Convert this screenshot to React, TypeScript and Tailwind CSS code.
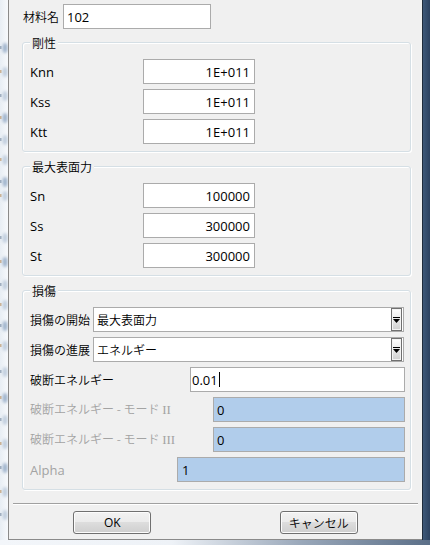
import React from "react";

const JP = "font-['Noto_Sans_CJK_JP',sans-serif] font-[350]";
const LAT = "font-['Open_Sans','Noto_Sans_CJK_JP',sans-serif]";

type BoxProps = {
  children?: React.ReactNode;
  className?: string;
  disabled?: boolean;
  right?: boolean;
};

function Box({ children, className = "", disabled = false, right = false }: BoxProps) {
  return (
    <div
      className={`h-[25px] border border-[#ababab] flex items-center text-[13px] leading-[16px] text-black ${LAT} ${
        disabled ? "bg-[#b1cdeb]" : "bg-white"
      } ${right ? "justify-end pr-[4px]" : ""} ${className}`}
    >
      {children}
    </div>
  );
}

function Combo({ text }: { text: string }) {
  return (
    <div className="h-[25px] w-[311px] mr-[1px] border border-[#ababab] bg-white flex items-stretch">
      <div className={`flex-1 flex items-center pl-[3px] text-[12px] leading-[16px] text-black ${JP}`}>{text}</div>
      <div className="w-[11px] mr-[1px] border border-[#707070] bg-[linear-gradient(#ffffff,#e4e4e4_60%,#cfcfcf)] shadow-[inset_0_0_0_1px_#f4f4f4] flex items-center justify-center">
        <svg width="7" height="6" viewBox="0 0 7 6">
          <rect x="0" y="0" width="7" height="1" fill="#000" />
          <polygon points="0,2 7,2 3.5,6" fill="#000" />
        </svg>
      </div>
    </div>
  );
}

function Group({ title, children, className = "" }: { title: string; children: React.ReactNode; className?: string }) {
  return (
    <div
      className={`relative ml-[13px] mr-[11px] border border-[#d5dfe5] rounded-[3px] pt-[16px] pb-[7px] pl-[7px] flex flex-col gap-[5px] shadow-[inset_1px_1px_0_#ffffff,1px_1px_0_#ffffff] ${className}`}
    >
      <span
        className={`absolute left-[7px] -top-[8px] px-[2px] bg-[#f0f0f0] text-[12px] leading-[16px] text-black ${JP}`}
      >
        {title}
      </span>
      {children}
    </div>
  );
}

function NumRow({ label, value }: { label: string; value: string }) {
  return (
    <div className="flex items-center h-[25px]">
      <span className={`w-[113px] text-[13px] leading-[16px] text-black ${LAT}`}>{label}</span>
      <Box className="w-[112px]" right>
        {value}
      </Box>
    </div>
  );
}

function LeftStrip() {
  const blobs = [48, 72, 96, 118, 140, 160, 182, 196, 238, 262, 285, 305, 326, 346, 372, 398, 420, 444, 468, 492, 515];
  return (
    <svg width="8" height="540" viewBox="0 0 8 540" className="block">
      <defs>
        <linearGradient id="lg" x1="0" x2="1">
          <stop offset="0" stopColor="#e8eef4" />
          <stop offset="1" stopColor="#f7f9fc" />
        </linearGradient>
        <filter id="bl" x="-1" y="-1" width="3" height="3">
          <feGaussianBlur stdDeviation="1.6" />
        </filter>
      </defs>
      <rect width="8" height="540" fill="url(#lg)" />
      {blobs.map((y, i) => (
        <ellipse key={i} cx="5" cy={y} rx="2.5" ry="5" fill={i % 3 === 0 ? "#9fb3cc" : "#c0cede"} filter="url(#bl)" />
      ))}
      {blobs.map((y, i) => (
        <rect key={"p" + i} x="0" y={y - 2} width="1.5" height="3" fill={i % 2 === 0 ? "#5a6f8c" : "#b07a3a"} opacity="0.5" />
      ))}
    </svg>
  );
}

export default function App() {
  return (
    <div className="w-[430px] h-[545px] flex flex-col overflow-hidden bg-white">
      <div className="flex h-[540px]">
        <LeftStrip />
        <div className="w-[1px] bg-[#8a8a8a]" />
        <div className="w-[413px] h-[540px] bg-[#f0f0f0] border-b border-[#8a8a8a] flex flex-col pt-[4px]">
          <div className="flex items-center h-[25px] pl-[14px]">
            <span className={`w-[40px] text-[12px] leading-[16px] text-black ${JP}`}>材料名</span>
            <Box className="w-[148px] pl-[3px]">102</Box>
          </div>

          <Group title="剛性" className="mt-[13px]">
            <NumRow label="Knn" value="1E+011" />
            <NumRow label="Kss" value="1E+011" />
            <NumRow label="Ktt" value="1E+011" />
          </Group>

          <Group title="最大表面力" className="mt-[14px]">
            <NumRow label="Sn" value="100000" />
            <NumRow label="Ss" value="300000" />
            <NumRow label="St" value="300000" />
          </Group>

          <Group title="損傷" className="mt-[14px] pr-[5px]">
            <div className="flex items-center h-[25px]">
              <span className={`flex-1 text-[12px] leading-[16px] text-black ${JP}`}>損傷の開始</span>
              <Combo text="最大表面力" />
            </div>
            <div className="flex items-center h-[25px]">
              <span className={`flex-1 text-[12px] leading-[16px] text-black ${JP}`}>損傷の進展</span>
              <Combo text="エネルギー" />
            </div>
            <div className="flex items-center h-[25px]">
              <span className={`flex-1 text-[12px] leading-[16px] text-black ${JP}`}>破断エネルギー</span>
              <Box className="w-[215px] pl-[1px]">
                <span>0.01</span>
                <span className="w-[1px] h-[15px] bg-black ml-[1px]" />
              </Box>
            </div>
            <div className="flex items-center h-[25px]">
              <span className={`flex-1 text-[12px] leading-[16px] text-[#a3a3a3] ${JP}`}>
                破断エネルギー - モード <span className="font-['Liberation_Serif',serif] text-[13px]">II</span>
              </span>
              <Box className="w-[192px] pl-[3px]" disabled>
                0
              </Box>
            </div>
            <div className="flex items-center h-[25px]">
              <span className={`flex-1 text-[12px] leading-[16px] text-[#a3a3a3] ${JP}`}>
                破断エネルギー - モード <span className="font-['Liberation_Serif',serif] text-[13px]">III</span>
              </span>
              <Box className="w-[192px] pl-[3px]" disabled>
                0
              </Box>
            </div>
            <div className="flex items-center h-[25px]">
              <span className={`flex-1 text-[13px] leading-[16px] text-[#a3a3a3] ${LAT}`}>Alpha</span>
              <Box className="w-[228px] pl-[4px]" disabled>
                1
              </Box>
            </div>
          </Group>

          <div className="mt-[13px] mx-[4px] h-[2px] border-t border-[#a0a0a0] border-b border-b-white" />

          <div className="mt-[6px] flex h-[23px]">
            <div className="flex-1 flex justify-center">
              <button
                className={`w-[78px] h-[23px] rounded-[3px] border border-[#707070] bg-[linear-gradient(#f2f2f2_0%,#ebebeb_49%,#dddddd_50%,#cfcfcf_100%)] shadow-[inset_0_0_0_1px_#fcfcfc] text-[12px] leading-[16px] text-black ${LAT}`}
              >
                OK
              </button>
            </div>
            <div className="flex-1 flex justify-center">
              <button
                className={`w-[78px] h-[23px] rounded-[3px] border border-[#707070] bg-[linear-gradient(#f2f2f2_0%,#ebebeb_49%,#dddddd_50%,#cfcfcf_100%)] shadow-[inset_0_0_0_1px_#fcfcfc] text-[12px] leading-[16px] text-black ${JP}`}
              >
                キャンセル
              </button>
            </div>
          </div>
        </div>
        <div className="w-[1px] bg-[#1f2c3c]" />
        <div className="w-[7px] bg-[linear-gradient(90deg,#3d5878,#2c4260)]" />
      </div>
      <div className="h-[5px] bg-[linear-gradient(90deg,#f3f6fa_0%,#eef2f7_40%,#9aa8ba_70%,#5b6f88_100%)]" />
    </div>
  );
}
